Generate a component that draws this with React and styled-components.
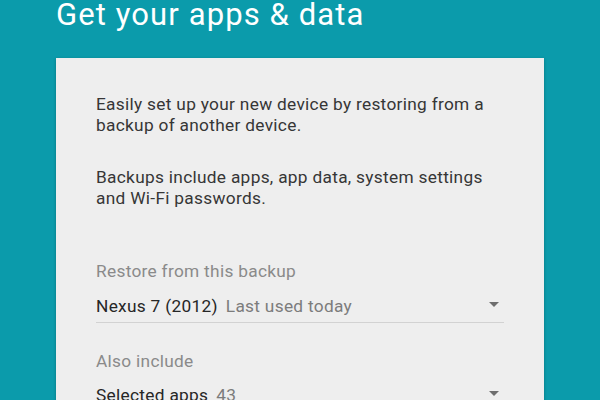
import React from "react";
import styled, { createGlobalStyle } from "styled-components";

const Global = createGlobalStyle`
  html, body { margin: 0; padding: 0; }
  body {
    background: #0b9bab;
    font-family: Roboto, "Noto Sans", sans-serif;
    width: 600px;
    height: 400px;
    overflow: hidden;
  }
`;

const Page = styled.div`
  display: flex;
  flex-direction: column;
  padding: 0 56px;
`;

const Title = styled.h1`
  margin: 0;
  font-size: 31px;
  line-height: 30px;
  font-weight: 400;
  color: #ffffff;
  letter-spacing: 1.1px;
  white-space: nowrap;
`;

const Card = styled.div`
  margin-top: 28px;
  background: #eeeeee;
  box-shadow: 0 1px 3px rgba(0, 0, 0, 0.25);
  padding: 36px 40px 40px;
  display: flex;
  flex-direction: column;
`;

const Text = styled.span`
  font-size: 17.3px;
  line-height: 21px;
  letter-spacing: 0.3px;
`;

const Para = styled(Text).attrs({ as: "p" })`
  margin: 0 0 31px;
  color: #363636;
`;

const Label = styled(Text).attrs({ as: "div" })`
  margin-top: ${(p) => p.$top}px;
  color: #8a8a8a;
`;

const Select = styled.div`
  margin-top: ${(p) => p.$top}px;
  display: flex;
  align-items: center;
  padding-bottom: 5px;
  border-bottom: 1px solid ${(p) => (p.$line ? "#d2d2d2" : "transparent")};
`;

const Value = styled(Text)`
  color: #262626;
  white-space: nowrap;
`;

const Hint = styled(Text)`
  color: #7c7c7c;
  margin-left: 8px;
  white-space: nowrap;
`;

const Arrow = styled.span`
  margin-left: auto;
  margin-right: 5px;
  margin-bottom: 4px;
  width: 0;
  height: 0;
  border-left: 5px solid transparent;
  border-right: 5px solid transparent;
  border-top: 5px solid #6e6e6e;
`;

export default function App() {
  return (
    <>
      <Global />
      <Page>
        <Title>Get your apps &amp; data</Title>
        <Card>
          <Para>
            Easily set up your new device by restoring from a
            <br />
            backup of another device.
          </Para>
          <Para>
            Backups include apps, app data, system settings
            <br />
            and Wi-Fi passwords.
          </Para>
          <Label $top={21}>Restore from this backup</Label>
          <Select $line $top={14}>
            <Value>Nexus 7 (2012)</Value>
            <Hint>Last used today</Hint>
            <Arrow />
          </Select>
          <Label $top={28}>Also include</Label>
          <Select $top={13}>
            <Value>Selected apps</Value>
            <Hint>43</Hint>
            <Arrow />
          </Select>
        </Card>
      </Page>
    </>
  );
}
